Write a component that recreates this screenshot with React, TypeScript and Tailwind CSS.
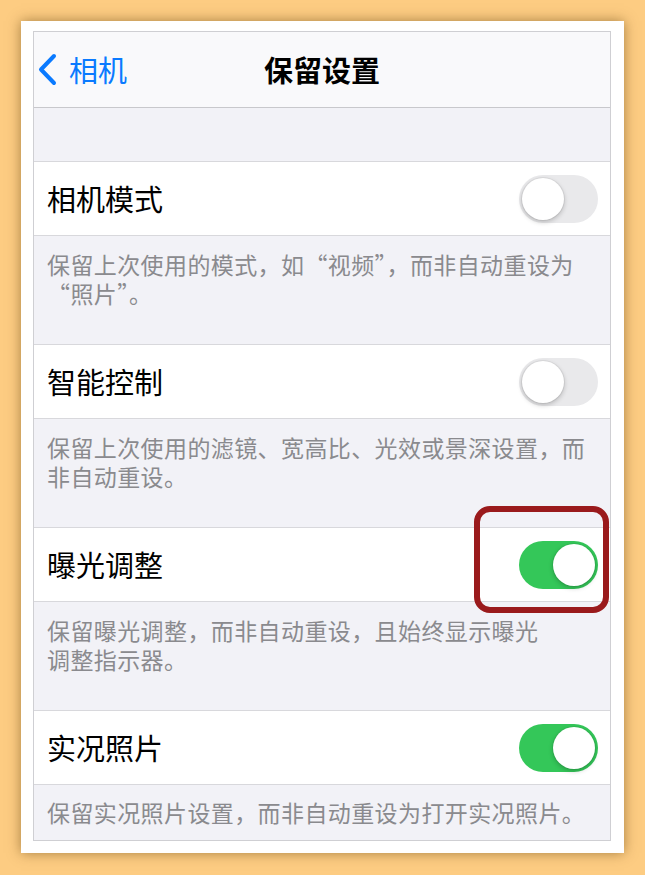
import React from "react";

const font = { fontFamily: '"Noto Sans CJK SC", "Noto Sans", sans-serif' };

function Toggle({ on }: { on: boolean }) {
  return (
    <div
      className={`flex h-[48px] w-[79px] items-center rounded-full p-[3px] ${
        on ? "justify-end bg-[#34c759]" : "justify-start bg-[#e9e9eb]"
      }`}
    >
      <div className="h-[42px] w-[42px] rounded-full bg-white shadow-[0_2px_5px_rgba(0,0,0,0.22),0_0_0_1px_rgba(0,0,0,0.05)]" />
    </div>
  );
}

function Row({ title, on }: { title: string; on: boolean }) {
  return (
    <div className="flex h-[75px] items-center justify-between border-y border-[#d8d8dc] bg-white pl-[13px] pr-[12px]">
      <span className="text-[29px] leading-none text-black">{title}</span>
      <Toggle on={on} />
    </div>
  );
}

function Footer({ lines, tall = true }: { lines: string[]; tall?: boolean }) {
  return (
    <div
      className={`pl-[13px] pr-[8px] text-[23px] leading-[29px] tracking-[0.4px] text-[#8a8a8e] ${
        tall ? "h-[108px] pt-[14px]" : "h-[55px] pt-[13px]"
      }`}
    >
      <p className="whitespace-nowrap">
        {lines.map((l, i) => (
          <React.Fragment key={l}>
            {i > 0 && <br />}
            {l}
          </React.Fragment>
        ))}
      </p>
    </div>
  );
}

export default function App() {
  return (
    <main className="min-h-[875px] bg-[#fdcc82] p-[21px]" style={font}>
      <div className="bg-white pb-[12px] pl-[12px] pr-[13px] pt-[10px] shadow-[0_0_12px_rgba(80,50,0,0.5)]">
        <div className="relative border border-[#cfcfd3] bg-[#f2f2f7]">
          <div className="relative flex h-[76px] items-center border-b border-[#c8c8cc] bg-[#f9f9fb]">
            <div className="flex items-center gap-[12px] pl-[3px] text-[#0a7aff]">
              <svg width="20" height="33" viewBox="0 0 20 33" fill="none">
                <path
                  d="M17 3 L4 16.5 L17 30"
                  stroke="#0a7aff"
                  strokeWidth="4"
                  strokeLinecap="round"
                  strokeLinejoin="round"
                />
              </svg>
              <span className="text-[29px] leading-none">相机</span>
            </div>
            <div className="absolute inset-x-0 text-center text-[29px] font-semibold leading-none text-black">
              保留设置
            </div>
          </div>
          <div className="h-[53px]" />
          <Row title="相机模式" on={false} />
          <Footer lines={["保留上次使用的模式，如“视频”，而非自动重设为", "“照片”。"]} />
          <Row title="智能控制" on={false} />
          <Footer lines={["保留上次使用的滤镜、宽高比、光效或景深设置，而", "非自动重设。"]} />
          <Row title="曝光调整" on={true} />
          <Footer lines={["保留曝光调整，而非自动重设，且始终显示曝光", "调整指示器。"]} />
          <Row title="实况照片" on={true} />
          <Footer lines={["保留实况照片设置，而非自动重设为打开实况照片。"]} tall={false} />

          <div className="absolute left-[440px] top-[474px] h-[107px] w-[135px] rounded-[16px] border-[6px] border-[#9a1a1c]" />
        </div>
      </div>
    </main>
  );
}
